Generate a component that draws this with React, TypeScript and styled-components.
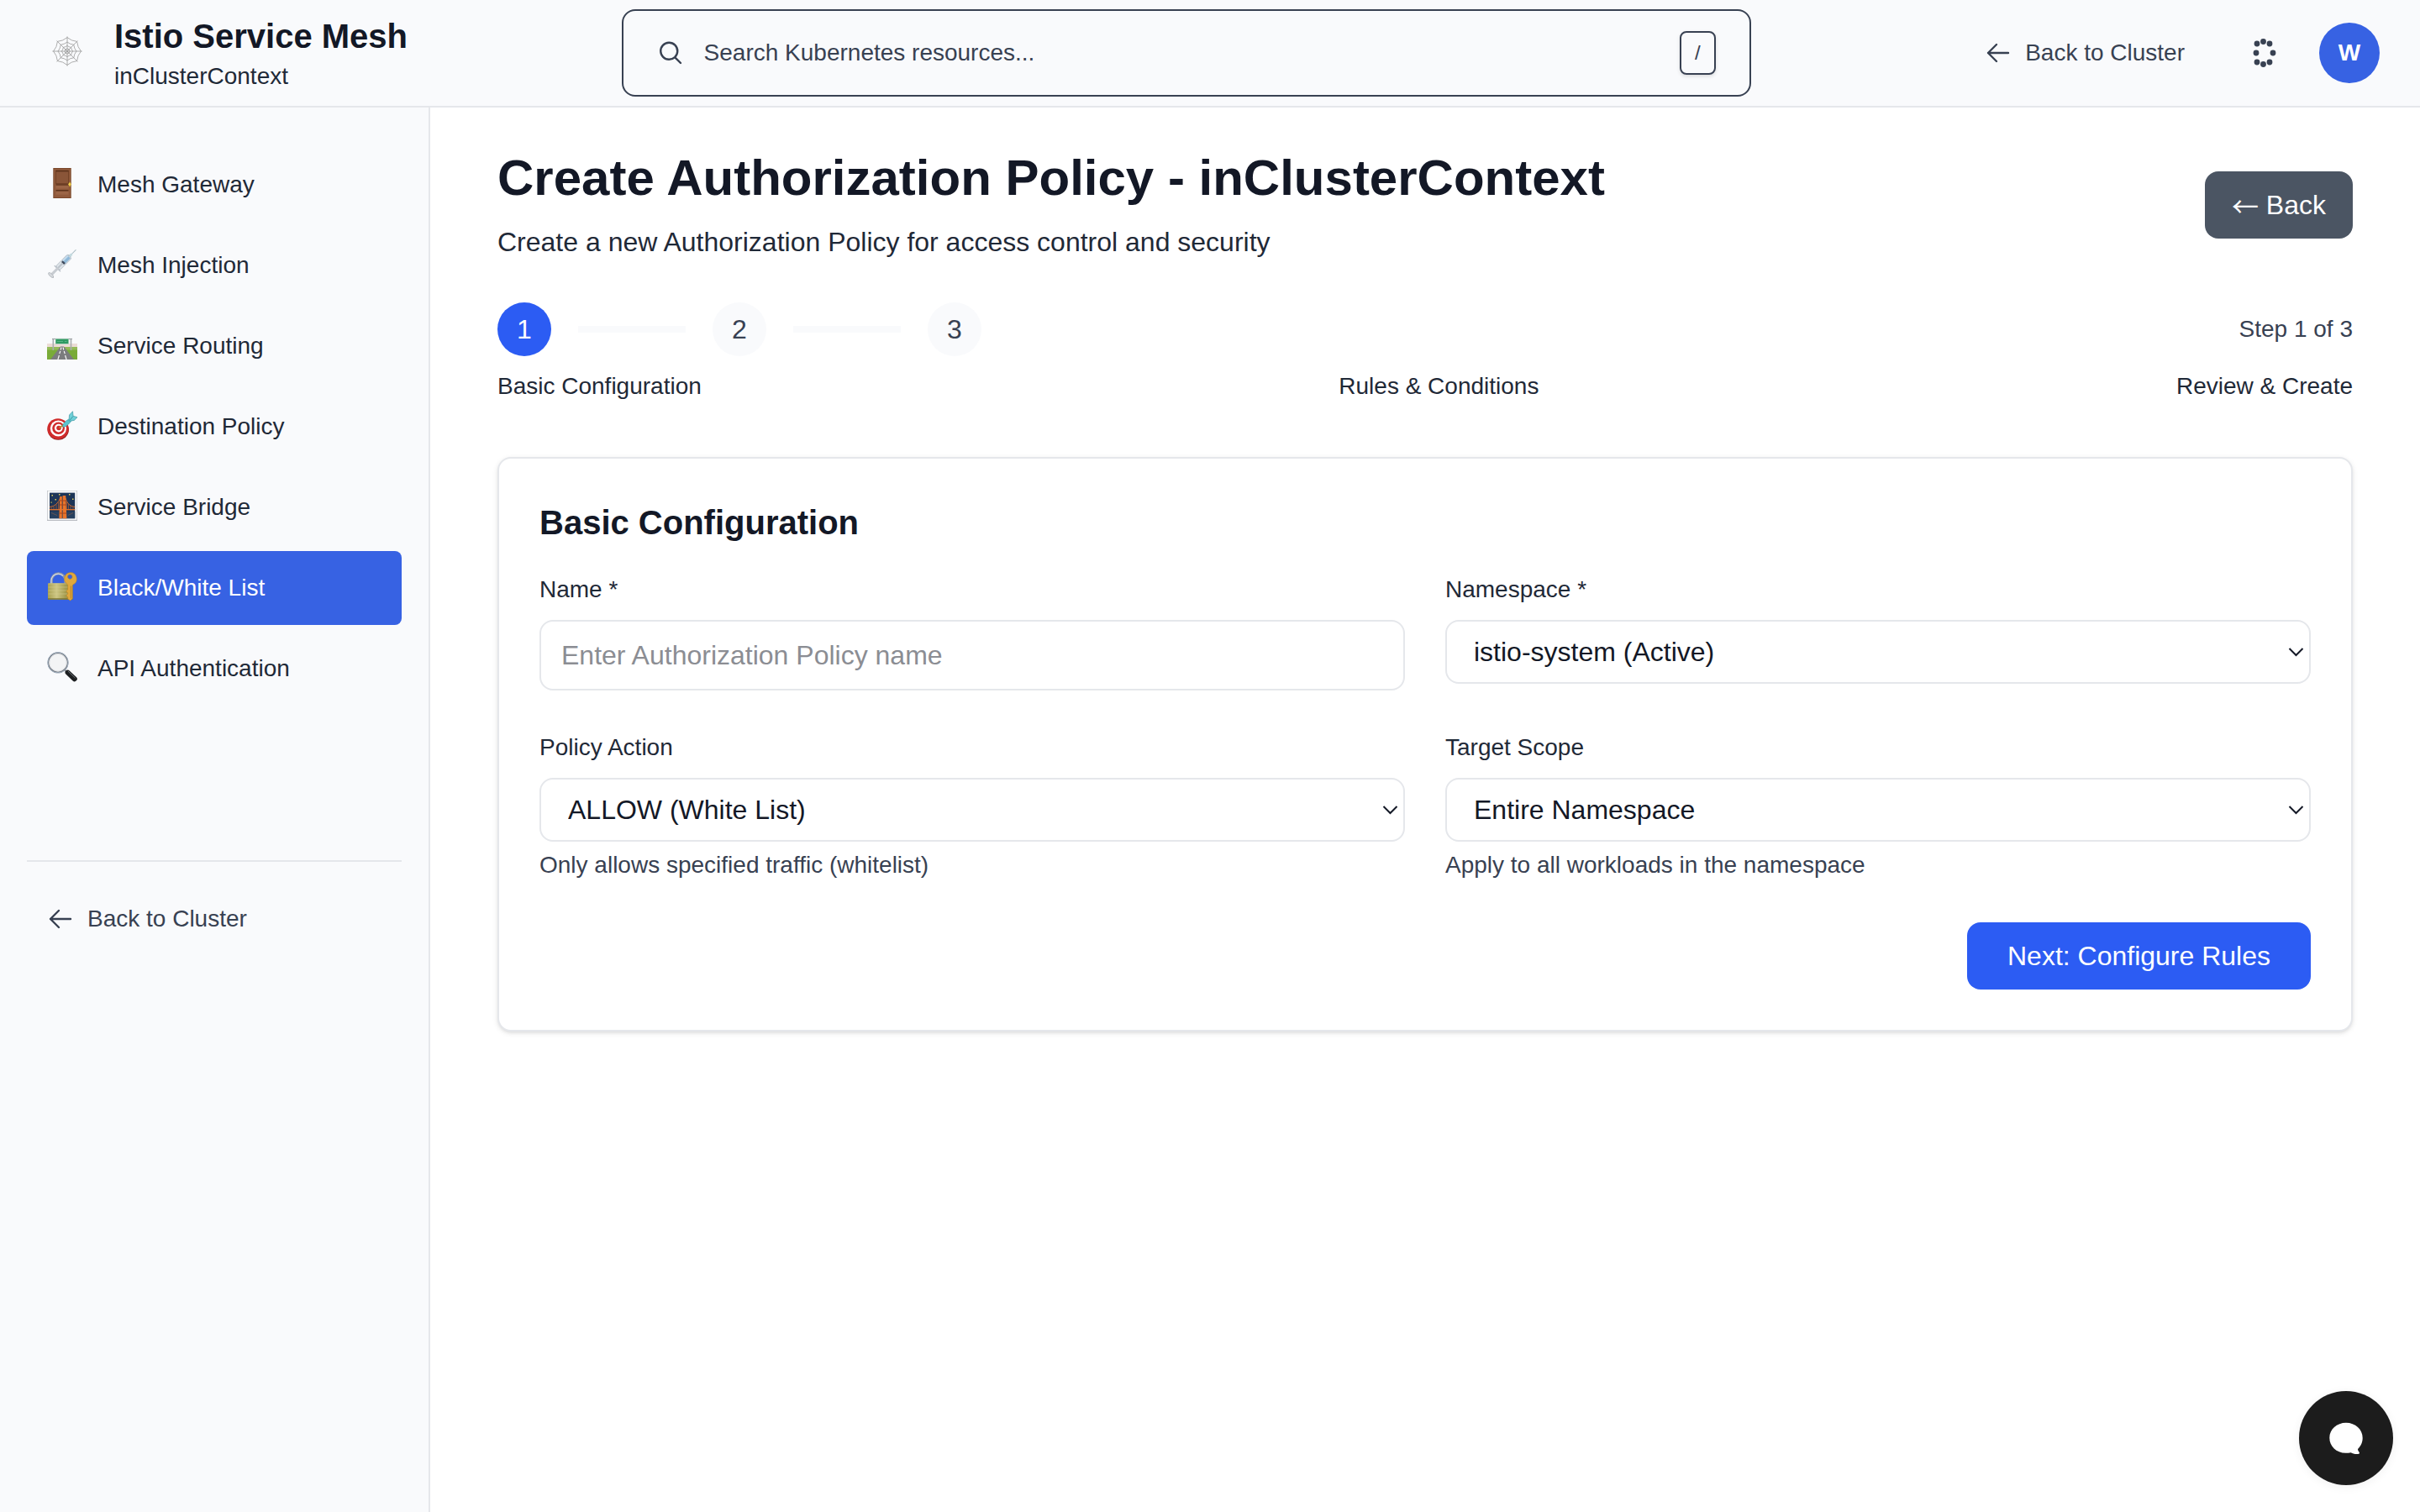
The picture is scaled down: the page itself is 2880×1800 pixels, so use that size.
import React from "react";
import styled, { createGlobalStyle } from "styled-components";

const color = {
  page: "#ffffff",
  panel: "#f9fafc",
  line: "#e5e7eb",
  heading: "#131826",
  text: "#1f2937",
  muted: "#384152",
  accent: "#3762e3",
  primary: "#2c5cf3",
  slate: "#4b5563",
  placeholder: "#8b8d93",
};

const GlobalStyle = createGlobalStyle`
  *, *::before, *::after { box-sizing: border-box; }
  body {
    margin: 0;
    background: ${color.page};
    color: ${color.text};
    font-family: "Liberation Sans", Arial, sans-serif;
    font-size: 28px;
    line-height: 40px;
  }
  button, input, select, kbd { font: inherit; }
  h1, h2, p { margin: 0; }
  svg { display: block; flex: none; }
`;

const Page = styled.div`
  min-height: 100vh;
  display: flex;
  flex-direction: column;
`;

/* ---------- header ---------- */

const Header = styled.header`
  display: flex;
  align-items: center;
  justify-content: space-between;
  height: 128px;
  padding: 0 48px;
  background: ${color.panel};
  border-bottom: 2px solid ${color.line};
`;

const Brand = styled.div`
  display: flex;
  align-items: center;
  gap: 24px;
`;

const BrandIcon = styled.span`
  display: flex;
  justify-content: center;
  width: 64px;
  padding-bottom: 4px;
`;

const BrandTitle = styled.p`
  font-size: 40px;
  line-height: 56px;
  font-weight: 700;
  color: ${color.heading};
`;

const BrandContext = styled.p`
  color: ${color.text};
`;

const SearchButton = styled.button`
  display: flex;
  align-items: center;
  gap: 24px;
  flex: 0 1 1344px;
  height: 104px;
  padding: 0 40px;
  border: 2px solid ${color.muted};
  border-radius: 16px;
  background: ${color.panel};
  color: ${color.muted};
  text-align: left;
`;

const SearchText = styled.span`
  flex: 1;
`;

const Key = styled.kbd`
  padding: 8px 16px;
  border: 2px solid ${color.muted};
  border-radius: 8px;
  font-size: 24px;
  line-height: 32px;
  box-shadow: 0 2px 4px rgba(0, 0, 0, 0.12);
`;

const HeaderActions = styled.div`
  display: flex;
  align-items: center;
  gap: 32px;
`;

const BackLink = styled.a`
  display: flex;
  align-items: center;
  gap: 16px;
  padding: 16px 24px;
  color: ${color.muted};
  text-decoration: none;
`;

const IconButton = styled.button`
  padding: 16px;
  border: 0;
  background: none;
  color: ${color.muted};
`;

const Avatar = styled.button`
  width: 72px;
  height: 72px;
  padding: 0;
  border: 0;
  border-radius: 50%;
  background: ${color.accent};
  color: #fff;
  font-weight: 700;
`;

/* ---------- sidebar ---------- */

const Body = styled.div`
  flex: 1;
  display: flex;
`;

const Sidebar = styled.aside`
  flex: none;
  width: 512px;
  padding: 48px 32px;
  background: ${color.panel};
  border-right: 2px solid ${color.line};
`;

const Nav = styled.nav`
  display: flex;
  flex-direction: column;
  gap: 8px;
`;

const NavLink = styled.a<{ $active?: boolean }>`
  display: flex;
  align-items: center;
  gap: 24px;
  padding: 24px;
  border-radius: 8px;
  background: ${(p) => (p.$active ? color.accent : "transparent")};
  color: ${(p) => (p.$active ? "#fff" : color.text)};
  text-decoration: none;
`;

const NavIcon = styled.span`
  padding-bottom: 4px;
`;

const SidebarFooter = styled.div`
  margin-top: 184px;
  padding-top: 32px;
  border-top: 2px solid ${color.line};
`;

/* ---------- main ---------- */

const Main = styled.main`
  flex: 1;
  min-width: 0;
  padding: 48px 80px;
`;

const TitleRow = styled.div`
  display: flex;
  align-items: center;
  justify-content: space-between;
  margin-bottom: 48px;
`;

const TitleBlock = styled.div`
  display: flex;
  flex-direction: column;
  gap: 16px;
`;

const Title = styled.h1`
  font-size: 60px;
  line-height: 72px;
  font-weight: 700;
  color: ${color.heading};
`;

const Subtitle = styled.p`
  font-size: 32px;
  line-height: 48px;
`;

const Button = styled.button<{ $primary?: boolean }>`
  padding: 16px ${(p) => (p.$primary ? "48px" : "32px")};
  border: 0;
  border-radius: 16px;
  background: ${(p) => (p.$primary ? color.primary : color.slate)};
  color: #fff;
  font-size: 32px;
  line-height: 48px;
`;

const Arrow = styled.span`
  font-family: "Noto Sans CJK SC", sans-serif;
  line-height: 1;
  vertical-align: -3px;
`;

const StepsRow = styled.div`
  display: flex;
  align-items: center;
  justify-content: space-between;
  margin-bottom: 16px;
`;

const Steps = styled.div`
  display: flex;
  align-items: center;
  gap: 32px;
`;

const StepDot = styled.span<{ $active?: boolean }>`
  display: flex;
  align-items: center;
  justify-content: center;
  width: 64px;
  height: 64px;
  border-radius: 50%;
  font-size: 32px;
  background: ${(p) => (p.$active ? color.primary : color.panel)};
  color: ${(p) => (p.$active ? "#fff" : color.muted)};
`;

const StepLine = styled.span`
  width: 128px;
  height: 8px;
  background: ${color.panel};
`;

const StepCount = styled.span`
  color: ${color.muted};
`;

const StepLabels = styled.div`
  display: flex;
  justify-content: space-between;
  margin-bottom: 64px;
`;

const Card = styled.section`
  padding: 48px;
  border: 2px solid ${color.line};
  border-radius: 16px;
  background: #fff;
  box-shadow: 0 2px 6px rgba(0, 0, 0, 0.1), 0 2px 4px -2px rgba(0, 0, 0, 0.1);
`;

const CardTitle = styled.h2`
  margin-bottom: 32px;
  font-size: 40px;
  line-height: 56px;
  font-weight: 700;
  color: ${color.heading};
`;

const FieldGrid = styled.div`
  display: grid;
  grid-template-columns: 1fr 1fr;
  gap: 48px;
  margin-bottom: 48px;
`;

const Field = styled.div`
  min-width: 0;
`;

const Label = styled.label`
  display: block;
  margin-bottom: 16px;
`;

const TextInput = styled.input`
  display: block;
  width: 100%;
  height: 84px;
  padding: 0 24px;
  border: 2px solid ${color.line};
  border-radius: 16px;
  background: #fff;
  color: ${color.heading};
  font-size: 32px;

  &::placeholder {
    color: ${color.placeholder};
    opacity: 1;
  }
`;

const SelectBox = styled.div`
  display: grid;
  align-items: center;

  & > * {
    grid-area: 1 / 1;
  }
  & > svg {
    justify-self: end;
    margin-right: 8px;
    pointer-events: none;
  }
`;

const SelectControl = styled.select`
  width: 100%;
  height: 76px;
  padding: 0 32px;
  border: 2px solid ${color.line};
  border-radius: 16px;
  background: #fff;
  color: ${color.heading};
  font-size: 32px;
  appearance: none;
`;

const Help = styled.p`
  margin-top: 8px;
  color: ${color.muted};
`;

const FormActions = styled.div`
  display: flex;
  justify-content: flex-end;
`;

const ChatButton = styled.button`
  position: fixed;
  right: 32px;
  bottom: 32px;
  width: 112px;
  height: 112px;
  padding: 0;
  display: flex;
  align-items: center;
  justify-content: center;
  border: 0;
  border-radius: 50%;
  background: #1c1c1c;
  box-shadow: 0 2px 12px rgba(0, 0, 0, 0.06);
`;

/* ---------- icons ---------- */

const WebIcon = () => {
  const spokes = Array.from({ length: 8 }, (_, i) => (i * Math.PI) / 4);
  const at = (a: number, r: number) =>
    `${(18 + r * Math.sin(a)).toFixed(2)} ${(18 - r * Math.cos(a)).toFixed(2)}`;
  const ring = (r: number) =>
    spokes
      .map((a, i) =>
        i === 0
          ? `M${at(a, r)}Q${at(a + Math.PI / 8, r * 0.8)} ${at(a + Math.PI / 4, r)}`
          : `Q${at(a + Math.PI / 8, r * 0.8)} ${at(a + Math.PI / 4, r)}`
      )
      .join("");
  return (
    <svg width="36" height="36" viewBox="0 0 36 36" fill="none" stroke="#9b9b9b" strokeWidth="0.8" aria-hidden="true">
      {spokes.map((a) => (
        <path key={a} d={`M18 18L${at(a, 17.6)}`} />
      ))}
      {[3.2, 6.6, 11, 16.4].map((r) => (
        <path key={r} d={ring(r)} />
      ))}
    </svg>
  );
};

const SearchIcon = () => (
  <svg width="32" height="32" viewBox="0 0 24 24" fill="none" stroke="currentColor" strokeWidth="1.8" strokeLinecap="round" aria-hidden="true">
    <path d="M21 21l-5.2-5.2m0 0A7.5 7.5 0 1 0 5.2 5.2a7.5 7.5 0 0 0 10.6 10.6z" />
  </svg>
);

const ArrowLeftIcon = () => (
  <svg width="32" height="32" viewBox="0 0 24 24" fill="none" stroke="currentColor" strokeWidth="1.8" strokeLinecap="round" strokeLinejoin="round" aria-hidden="true">
    <path d="M10.5 19.5 3 12m0 0 7.5-7.5M3 12h18" />
  </svg>
);

const DotsIcon = () => {
  const dots = [
    [21.5, 6.5], [29, 9], [14, 9], [13, 20], [33, 20], [14, 31], [29, 31], [21.5, 33.5],
  ];
  return (
    <svg width="40" height="40" viewBox="0 0 40 40" fill="currentColor" aria-hidden="true">
      {dots.map(([x, y]) => (
        <circle key={`${x}-${y}`} cx={x} cy={y} r="3.4" />
      ))}
    </svg>
  );
};

const ChevronIcon = () => (
  <svg width="20" height="12" viewBox="0 0 20 12" fill="none" stroke={color.heading} strokeWidth="2" aria-hidden="true">
    <path d="M2.5 2l8 8 8-8" />
  </svg>
);

const ChatIcon = () => (
  <svg width="40" height="40" viewBox="0 0 40 40" fill="#fff" aria-hidden="true">
    <path d="M20 1.7C31 1.700 39.700 9.500 39.700 19.700C39.700 25.500 37.500 29.500 34 33C33.800 34.800 35.200 36 35.800 37C36.300 38.200 35.600 38.900 34.200 39C30.500 39.200 27.800 38.600 25.800 37.300C23.800 37.700 21.800 37.800 19.500 37.800C8.500 37.600 .3 29.800 .3 19.700C.3 9.500 9 1.700 20 1.700Z" />
  </svg>
);

const Emoji = ({ children }: { children: React.ReactNode }) => (
  <svg width="36" height="36" viewBox="0 0 36 36" aria-hidden="true">
    {children}
  </svg>
);

const DoorIcon = () => (
  <Emoji>
    <rect x="7.3" y="0" width="21.4" height="36" fill="#7a4629" />
    <rect x="8.3" y="1" width="19.4" height="34" fill="#915a3c" />
    <rect x="10.5" y="3" width="15" height="15.5" fill="#8a5538" stroke="#6b3c22" strokeWidth="0.8" />
    <rect x="10.5" y="3" width="15" height="1.4" fill="#5d331c" />
    <rect x="10.5" y="20.5" width="15" height="4" fill="#9c6546" />
    <rect x="10.5" y="19.3" width="15" height="1.3" fill="#5d331c" />
    <rect x="10.5" y="27" width="15" height="4.8" fill="#9c6546" />
    <rect x="10.5" y="26" width="15" height="1.6" fill="#5d331c" />
    <rect x="26.2" y="16.8" width="1.8" height="5.4" rx="0.6" fill="#c9a227" />
    <circle cx="27" cy="19.3" r="1.6" fill="#f1d04b" />
  </Emoji>
);

const SyringeIcon = () => (
  <Emoji>
    <g transform="rotate(44.5 18 18)" strokeLinecap="round">
      <path d="M18-5V4" stroke="#a9bcc4" strokeWidth="1" />
      <path d="M16.8 1.5h2.4L20 5.500h-4z" fill="#c3dbe0" />
      <rect x="14.7" y="5.5" width="6.6" height="20" rx="1.6" fill="#dfe5ea" stroke="#a3adb8" strokeWidth="0.7" />
      <rect x="15.6" y="6.5" width="4.8" height="9" fill="#8fb8d8" />
      <rect x="15.6" y="6.5" width="1.5" height="9" fill="#c4def0" />
      <rect x="15.8" y="14.8" width="4.4" height="2.4" fill="#3f4a5c" />
      <rect x="17" y="17.4" width="2" height="17" fill="#bcc3cb" />
      <path d="M13.5 26h9" stroke="#b9c0c8" strokeWidth="1.4" />
      <path d="M18 26v9" stroke="#c8ccd2" strokeWidth="3" />
      <ellipse cx="18" cy="37" rx="4" ry="1.7" fill="#d5d8dc" stroke="#a5abb2" strokeWidth="0.6" />
    </g>
  </Emoji>
);

const RoadIcon = () => (
  <Emoji>
    <rect x="0" y="17" width="36" height="5" fill="#ecdcd6" />
    <rect x="0" y="21" width="36" height="15" fill="#79ab38" />
    <path d="M0 21h36v3.500H0z" fill="#94bb59" />
    <path d="M16 20.500h4L32 36H4z" fill="#7b7c7e" />
    <path d="M17 21.500l-.8 3M15.800 26l-1 3.200M14.400 31l-1.500 5M19 21.500l.8 3M20.200 26l1 3.200M21.600 31l1.500 5" stroke="#fff" strokeWidth="1.1" />
    <path d="M7.300 11v14M28.500 11v14" stroke="#a9adb0" strokeWidth="1.6" />
    <path d="M6 11.500h24" stroke="#9ea3a6" strokeWidth="1.2" />
    <rect x="10" y="11.3" width="15.8" height="6.3" rx="0.5" fill="#2f9a63" stroke="#d7e7dd" strokeWidth="0.6" />
    <path d="M12 14.500h7M21 14.500h2.500" stroke="#58b484" strokeWidth="1" />
  </Emoji>
);

const TargetIcon = () => (
  <Emoji>
    <ellipse cx="13.3" cy="23.6" rx="12.6" ry="12.2" fill="#8c1b1b" />
    <ellipse cx="13" cy="22.6" rx="12.7" ry="12.4" fill="#d02c2c" />
    <ellipse cx="13.4" cy="22" rx="9.6" ry="9.4" fill="#fff" />
    <ellipse cx="13.6" cy="21.8" rx="7.4" ry="7.2" fill="#d02c2c" />
    <ellipse cx="13.8" cy="21.6" rx="4.9" ry="4.8" fill="#fff" />
    <ellipse cx="14" cy="21.5" rx="2.8" ry="2.7" fill="#d02c2c" />
    <path d="M14.500 21.500l5.500-4" stroke="#b58a2a" strokeWidth="1.6" />
    <path d="M18.500 19c.5-2.500 4-7 9-8.500l1.400 2.500c-2.500 3.800-6.400 7-9.400 7.500z" fill="#5cc4ce" stroke="#2f8d99" strokeWidth="0.5" />
    <path d="M26 12.800L26.500 6l4-4.300 .6 5.600 5 1.400-3.800 3.700-4.800.8z" fill="#6fd0d8" stroke="#318c98" strokeWidth="0.6" />
    <path d="M27 12.300L31 7.500" stroke="#2f8d99" strokeWidth="0.8" />
  </Emoji>
);

const BridgeIcon = () => (
  <Emoji>
    <rect x="0" y="0" width="36" height="36" fill="#b9bcc2" />
    <rect x="0.7" y="0.5" width="34.6" height="34.3" fill="#fdfdfd" />
    <rect x="3" y="2.6" width="30.2" height="30.6" fill="#1d3557" />
    <rect x="3" y="25" width="30.2" height="8.2" fill="#27405f" />
    <path d="M3 19.500Q12 19 16 8M33.200 19.500Q24.500 19 21.500 8" fill="none" stroke="#c9682f" strokeWidth="1" />
    <path d="M5 19.500v3M8 18.500v4M11 16.500v6M13.500 13.500v9M31 19.500v3M28 18v4.500M25.500 15.500v7M23.500 12.500v10" stroke="#a85a33" strokeWidth="0.8" />
    <rect x="3" y="22" width="30.2" height="1.4" fill="#d8702f" />
    <path d="M14.300 33.200L15.200 7h2.600v26.200zM18.600 33.200V6h3.600l1.200 27.200z" fill="#e8742a" />
    <path d="M15 12h8M15 17h8M14.600 27h8.600" stroke="#a9431a" strokeWidth="1.2" />
    <path d="M5 26.500l7 3M31 26.500l-6 3" stroke="#7b5a4c" strokeWidth="0.7" />
    <g fill="#e6d25a">
      <rect x="5.5" y="5" width="1.5" height="1.5" />
      <rect x="14" y="4" width="1.5" height="1.5" />
      <rect x="26" y="4" width="1.5" height="1.5" />
      <rect x="30" y="9.5" width="1.5" height="1.5" />
      <rect x="9.5" y="10" width="1.5" height="1.5" />
      <rect x="4.5" y="13.5" width="1.2" height="1.2" />
    </g>
  </Emoji>
);

const LockIcon = () => (
  <Emoji>
    <defs>
      <linearGradient id="lock-brass" x1="0" x2="1" y1="0" y2="0">
        <stop offset="0" stopColor="#a8a050" />
        <stop offset="0.35" stopColor="#cdc684" />
        <stop offset="0.7" stopColor="#a59c4f" />
        <stop offset="1" stopColor="#8f863c" />
      </linearGradient>
    </defs>
    <path d="M5.300 16v-4.500a8 8.600 0 0 1 16.500 0V16" fill="none" stroke="#8d98ab" strokeWidth="3" />
    <path d="M4.900 15v-3.500a8.400 9 0 0 1 14-6" fill="none" stroke="#d6dce6" strokeWidth="1.1" />
    <rect x="1" y="14.3" width="29.5" height="19.5" rx="1" fill="url(#lock-brass)" />
    <path d="M1.500 15h28M1.500 19h28M1.500 23h28M1.500 27h28" stroke="#d6cf90" strokeWidth="0.5" />
    <path d="M1 33h29.500" stroke="#77702f" strokeWidth="1.4" />
    <path fillRule="evenodd" d="M27.600 1.600a7.600 7.600 0 0 1 3.200 14.500l-.6 1.400v15.200L27.700 35l-3-2v-2.200l-1.500-1v-1.600l1.500-1v-1.400l-1.500-1v-1.800l1.500-1v-5.500l-1-1.200A7.600 7.600 0 0 1 27.600 1.600zM27.300 4a2.700 2.700 0 1 0 .01 0z" fill="#e0a83c" stroke="#b67f22" strokeWidth="0.5" />
    <path d="M28.300 17.500v15" stroke="#b98124" strokeWidth="1" />
  </Emoji>
);

const MagnifierIcon = () => (
  <Emoji>
    <path d="M21 21.500l3.500 3.500" stroke="#8a9096" strokeWidth="2.2" />
    <path d="M24.600 24.600l8.100 7.600" stroke="#1d1f21" strokeWidth="6" strokeLinecap="round" />
    <path d="M25.300 23.300l8 7.600" stroke="#6d7276" strokeWidth="1" strokeLinecap="round" />
    <circle cx="13" cy="12.8" r="11.6" fill="#f3f4f5" stroke="#73787e" strokeWidth="1.8" />
    <circle cx="13" cy="12.8" r="12.2" fill="none" stroke="#b4c9e0" strokeWidth="0.7" />
    <circle cx="13" cy="12.8" r="10.2" fill="none" stroke="#d8dbdf" strokeWidth="0.8" />
  </Emoji>
);

/* ---------- page ---------- */

const navItems = [
  { label: "Mesh Gateway", Icon: DoorIcon },
  { label: "Mesh Injection", Icon: SyringeIcon },
  { label: "Service Routing", Icon: RoadIcon },
  { label: "Destination Policy", Icon: TargetIcon },
  { label: "Service Bridge", Icon: BridgeIcon },
  { label: "Black/White List", Icon: LockIcon, active: true },
  { label: "API Authentication", Icon: MagnifierIcon },
];

const stepNames = ["Basic Configuration", "Rules & Conditions", "Review & Create"];

type SelectFieldProps = { id: string; label: string; options: string[]; help?: string };

const SelectField = ({ id, label, options, help }: SelectFieldProps) => (
  <Field>
    <Label htmlFor={id}>{label}</Label>
    <SelectBox>
      <SelectControl id={id}>
        {options.map((option) => (
          <option key={option}>{option}</option>
        ))}
      </SelectControl>
      <ChevronIcon />
    </SelectBox>
    {help && <Help>{help}</Help>}
  </Field>
);

export default function App() {
  return (
    <Page>
      <GlobalStyle />
      <Header>
        <Brand>
          <BrandIcon>
            <WebIcon />
          </BrandIcon>
          <div>
            <BrandTitle>Istio Service Mesh</BrandTitle>
            <BrandContext>inClusterContext</BrandContext>
          </div>
        </Brand>
        <SearchButton type="button">
          <SearchIcon />
          <SearchText>Search Kubernetes resources...</SearchText>
          <Key>/</Key>
        </SearchButton>
        <HeaderActions>
          <BackLink href="#cluster">
            <ArrowLeftIcon />
            Back to Cluster
          </BackLink>
          <IconButton type="button" aria-label="Theme">
            <DotsIcon />
          </IconButton>
          <Avatar type="button">W</Avatar>
        </HeaderActions>
      </Header>
      <Body>
        <Sidebar>
          <Nav>
            {navItems.map(({ label, Icon, active }) => (
              <NavLink key={label} href="#" $active={active}>
                <NavIcon>
                  <Icon />
                </NavIcon>
                {label}
              </NavLink>
            ))}
          </Nav>
          <SidebarFooter>
            <BackLink href="#cluster">
              <ArrowLeftIcon />
              Back to Cluster
            </BackLink>
          </SidebarFooter>
        </Sidebar>
        <Main>
          <TitleRow>
            <TitleBlock>
              <Title>Create Authorization Policy - inClusterContext</Title>
              <Subtitle>Create a new Authorization Policy for access control and security</Subtitle>
            </TitleBlock>
            <Button type="button">
              <Arrow>←</Arrow> Back
            </Button>
          </TitleRow>
          <StepsRow>
            <Steps>
              {stepNames.map((name, i) => (
                <React.Fragment key={name}>
                  {i > 0 && <StepLine />}
                  <StepDot $active={i === 0}>{i + 1}</StepDot>
                </React.Fragment>
              ))}
            </Steps>
            <StepCount>Step 1 of 3</StepCount>
          </StepsRow>
          <StepLabels>
            {stepNames.map((name) => (
              <span key={name}>{name}</span>
            ))}
          </StepLabels>
          <Card>
            <CardTitle>Basic Configuration</CardTitle>
            <FieldGrid>
              <Field>
                <Label htmlFor="policy-name">Name *</Label>
                <TextInput id="policy-name" type="text" placeholder="Enter Authorization Policy name" />
              </Field>
              <SelectField id="namespace" label="Namespace *" options={["istio-system (Active)"]} />
              <SelectField
                id="policy-action"
                label="Policy Action"
                options={["ALLOW (White List)"]}
                help="Only allows specified traffic (whitelist)"
              />
              <SelectField
                id="target-scope"
                label="Target Scope"
                options={["Entire Namespace"]}
                help="Apply to all workloads in the namespace"
              />
            </FieldGrid>
            <FormActions>
              <Button type="button" $primary>
                Next: Configure Rules
              </Button>
            </FormActions>
          </Card>
        </Main>
      </Body>
      <ChatButton type="button" aria-label="Open chat">
        <ChatIcon />
      </ChatButton>
    </Page>
  );
}
